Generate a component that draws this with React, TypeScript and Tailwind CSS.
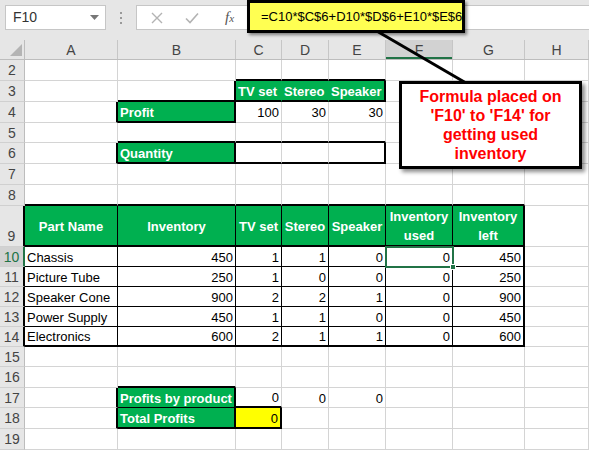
import React from "react";

type Edge = "grid" | "thin" | "thick";
type Cell = { t?: string; a?: "l" | "r" | "c"; fill?: "green" | "yellow"; wrap?: boolean };
type Box = { r1: number; r2: number; c1: number; c2: number };

const COLS = ["A", "B", "C", "D", "E", "F", "G", "H"];
const TEMPLATE = "grid grid-cols-[25px_93px_118px_46px_47px_57px_67px_72px_64px] grid-rows-[100%]";

const ROW_H: Record<number, string> = {
  2: "h-[21px]",
  3: "h-[21px]",
  4: "h-[21px]",
  5: "h-[20px]",
  6: "h-[21px]",
  7: "h-[21px]",
  8: "h-[21px]",
  9: "h-[41px]",
  10: "h-[20px]",
  11: "h-[20px]",
  12: "h-[20px]",
  13: "h-[20px]",
  14: "h-[20px]",
  15: "h-[20px]",
  16: "h-[21px]",
  17: "h-[20px]",
  18: "h-[21px]",
  19: "h-[21px]",
};

// thick outlines drawn round ranges (0 = column A)
const BOXES: Box[] = [
  { r1: 3, r2: 3, c1: 2, c2: 4 },
  { r1: 4, r2: 4, c1: 1, c2: 1 },
  { r1: 6, r2: 6, c1: 1, c2: 1 },
  { r1: 6, r2: 6, c1: 2, c2: 4 },
  { r1: 9, r2: 14, c1: 0, c2: 6 },
  { r1: 9, r2: 9, c1: 0, c2: 6 },
  { r1: 17, r2: 18, c1: 1, c2: 1 },
  { r1: 18, r2: 18, c1: 2, c2: 2 },
];

const g = (t: string): Cell => ({ t, fill: "green" });
const n = (t: string): Cell => ({ t, a: "r" });
const h = (t: string): Cell => ({ t, fill: "green", a: "c", wrap: true });

const DATA: Record<number, Record<number, Cell>> = {
  3: { 2: g("TV set"), 3: g("Stereo"), 4: g("Speaker") },
  4: { 1: g("Profit"), 2: n("100"), 3: n("30"), 4: n("30") },
  6: { 1: g("Quantity") },
  9: {
    0: h("Part Name"),
    1: h("Inventory"),
    2: h("TV set"),
    3: h("Stereo"),
    4: h("Speaker"),
    5: h("Inventory used"),
    6: h("Inventory left"),
  },
  10: { 0: { t: "Chassis" }, 1: n("450"), 2: n("1"), 3: n("1"), 4: n("0"), 5: n("0"), 6: n("450") },
  11: { 0: { t: "Picture Tube" }, 1: n("250"), 2: n("1"), 3: n("0"), 4: n("0"), 5: n("0"), 6: n("250") },
  12: { 0: { t: "Speaker Cone" }, 1: n("900"), 2: n("2"), 3: n("2"), 4: n("1"), 5: n("0"), 6: n("900") },
  13: { 0: { t: "Power Supply" }, 1: n("450"), 2: n("1"), 3: n("1"), 4: n("0"), 5: n("0"), 6: n("450") },
  14: { 0: { t: "Electronics" }, 1: n("600"), 2: n("2"), 3: n("1"), 4: n("1"), 5: n("0"), 6: n("600") },
  17: { 1: g("Profits by product"), 2: n("0"), 3: n("0"), 4: n("0") },
  18: { 1: g("Total Profits"), 2: { t: "0", a: "r", fill: "yellow" } },
};

const inTable = (r: number, c: number) => r >= 9 && r <= 14 && c >= 0 && c <= 6;

function bottomEdge(r: number, c: number): Edge {
  for (const b of BOXES) {
    if (c >= b.c1 && c <= b.c2 && (r === b.r2 || r + 1 === b.r1)) return "thick";
  }
  if (r === 17 && c === 1) return "thin";
  if (inTable(r, c) && r < 14) return "thin";
  return "grid";
}

function rightEdge(r: number, c: number): Edge {
  for (const b of BOXES) {
    if (r >= b.r1 && r <= b.r2 && (c === b.c2 || c + 1 === b.c1)) return "thick";
  }
  if (inTable(r, c) && c < 6) return "thin";
  return "grid";
}

function edgeClasses(bottom: Edge, right: Edge, filled: boolean) {
  const b =
    bottom === "thick"
      ? "border-b-2 border-b-black"
      : bottom === "thin"
        ? "border-b border-b-black"
        : filled
          ? "border-b border-b-transparent"
          : "border-b border-b-[#d4d4d4]";
  const rr =
    right === "thick"
      ? "border-r-2 border-r-black"
      : right === "thin"
        ? "border-r border-r-black"
        : filled
          ? "border-r border-r-transparent"
          : "border-r border-r-[#d4d4d4]";
  return `${b} ${rr}`;
}

function SheetCell({ r, c }: { r: number; c: number }) {
  const cell = DATA[r]?.[c];
  const fill = cell?.fill;
  const bg =
    fill === "green" ? "bg-[#00b050] text-white font-bold" : fill === "yellow" ? "bg-[#ffff00]" : "bg-white";
  const align =
    cell?.a === "r" ? "justify-end text-right" : cell?.a === "c" ? "justify-center text-center" : "justify-start";
  return (
    <div
      className={`flex min-h-0 min-w-0 items-center overflow-visible px-[2px] pt-[1px] ${bg} ${align} ${edgeClasses(
        bottomEdge(r, c),
        rightEdge(r, c),
        !!fill
      )}`}
    >
      {cell?.t ? (
        <span className={cell.wrap ? "leading-[19px]" : "whitespace-nowrap leading-none"}>{cell.t}</span>
      ) : null}
    </div>
  );
}

function RowHeader({ r }: { r: number }) {
  const selected = r === 10;
  const tableEdge = r >= 9 && r <= 14;
  const right = selected
    ? "border-r-2 border-r-[#217346]"
    : tableEdge
      ? "border-r-2 border-r-black"
      : "border-r border-r-[#bdbdbd]";
  return (
    <div
      className={`flex min-h-0 justify-center border-b border-b-[#d0d0d0] text-[14px] leading-none ${right} ${
        selected ? "bg-[#d2d2d2] text-[#217346]" : "bg-[#e6e6e6] text-[#444]"
      } ${r === 9 ? "items-end pb-[3px]" : "items-center"}`}
    >
      {r}
    </div>
  );
}

function FormulaBar() {
  return (
    <div className="flex h-[40px] items-start bg-[#e6e6e6] pt-[5px]">
      <div className="ml-[5px] flex h-[25px] w-[101px] items-center justify-between border border-[#c6c6c6] bg-white pl-[7px] pr-[6px] text-[14px] text-[#333]">
        <span>F10</span>
        <svg width="9" height="5" viewBox="0 0 9 5">
          <polygon points="0,0 9,0 4.5,5" fill="#777" />
        </svg>
      </div>
      <div className="ml-[12px] flex h-[25px] w-[6px] flex-col items-center justify-center gap-[3px]">
        <span className="h-[2px] w-[2px] bg-[#999]" />
        <span className="h-[2px] w-[2px] bg-[#999]" />
        <span className="h-[2px] w-[2px] bg-[#999]" />
      </div>
      <div className="ml-[12px] flex h-[25px] flex-1 items-center border border-r-0 border-[#c6c6c6] bg-white">
        <svg className="ml-[14px]" width="12" height="12" viewBox="0 0 12 12">
          <path d="M1 1L11 11M11 1L1 11" stroke="#b3b3b3" strokeWidth="1.4" />
        </svg>
        <svg className="ml-[22px]" width="14" height="12" viewBox="0 0 14 12">
          <path d="M1 6.5L5 10.5L13 1.5" stroke="#b3b3b3" strokeWidth="1.6" fill="none" />
        </svg>
        <span className="ml-[26px] font-['Liberation_Serif',serif] text-[15px] italic text-[#555]">
          f<span className="text-[11px]">x</span>
        </span>
      </div>
    </div>
  );
}

function ColumnHeaders() {
  return (
    <div className={`${TEMPLATE} h-[20px] border-b border-b-[#bdbdbd] bg-[#e6e6e6] text-[14px] leading-none text-[#444]`}>
      <div className="relative border-r border-r-[#bdbdbd]">
        <svg className="absolute right-[2px] bottom-[3px]" width="12" height="12" viewBox="0 0 12 12">
          <polygon points="12,0 12,12 0,12" fill="#b4b4b4" />
        </svg>
      </div>
      {COLS.map((c) => (
        <div
          key={c}
          className={`flex items-center justify-center border-r border-r-[#c6c6c6] ${
            c === "F" ? "bg-[#d2d2d2] shadow-[inset_0_-2px_0_#217346]" : ""
          }`}
        >
          {c}
        </div>
      ))}
    </div>
  );
}

export default function App() {
  const rows = Array.from({ length: 18 }, (_, i) => i + 2);
  return (
    <div className="relative h-[450px] w-[589px] overflow-hidden bg-white font-['Liberation_Sans',Arial,sans-serif] text-[13px] text-black">
      <FormulaBar />
      <ColumnHeaders />
      {rows.map((r) => (
        <div key={r} className={`${TEMPLATE} ${ROW_H[r]}`}>
          <RowHeader r={r} />
          {COLS.map((_, c) => (
            <SheetCell key={c} r={r} c={c} />
          ))}
        </div>
      ))}

      {/* connector from formula to callout */}
      <svg className="pointer-events-none absolute left-0 top-0" width="589" height="450">
        <line x1="375" y1="30" x2="466" y2="83" stroke="#000" strokeWidth="3" />
      </svg>

      {/* selected cell F10 */}
      <div className="absolute left-[385px] top-[246px] h-[22px] w-[69px] border-2 border-[#217346]" />
      <div className="absolute left-[450px] top-[264px] h-[6px] w-[6px] border border-white bg-[#217346]" />

      {/* highlighted formula */}
      <div className="absolute left-[247px] top-0 flex h-[33px] w-[218px] items-center border-[3px] border-black bg-[#ffff52] pl-[11px] text-[13px] shadow-[2px_2px_3px_rgba(0,0,0,0.45)]">
        =C10*$C$6+D10*$D$6+E10*$E$6
      </div>

      {/* callout */}
      <div className="absolute left-[399px] top-[81px] flex h-[88px] w-[183px] items-center justify-center border-[3px] border-black bg-white text-center text-[16px] font-bold leading-[19px] text-[#ff0000] shadow-[3px_3px_4px_rgba(0,0,0,0.45)]">
        <span>
          Formula placed on
          <br />
          'F10' to 'F14' for
          <br />
          getting used
          <br />
          inventory
        </span>
      </div>
    </div>
  );
}
